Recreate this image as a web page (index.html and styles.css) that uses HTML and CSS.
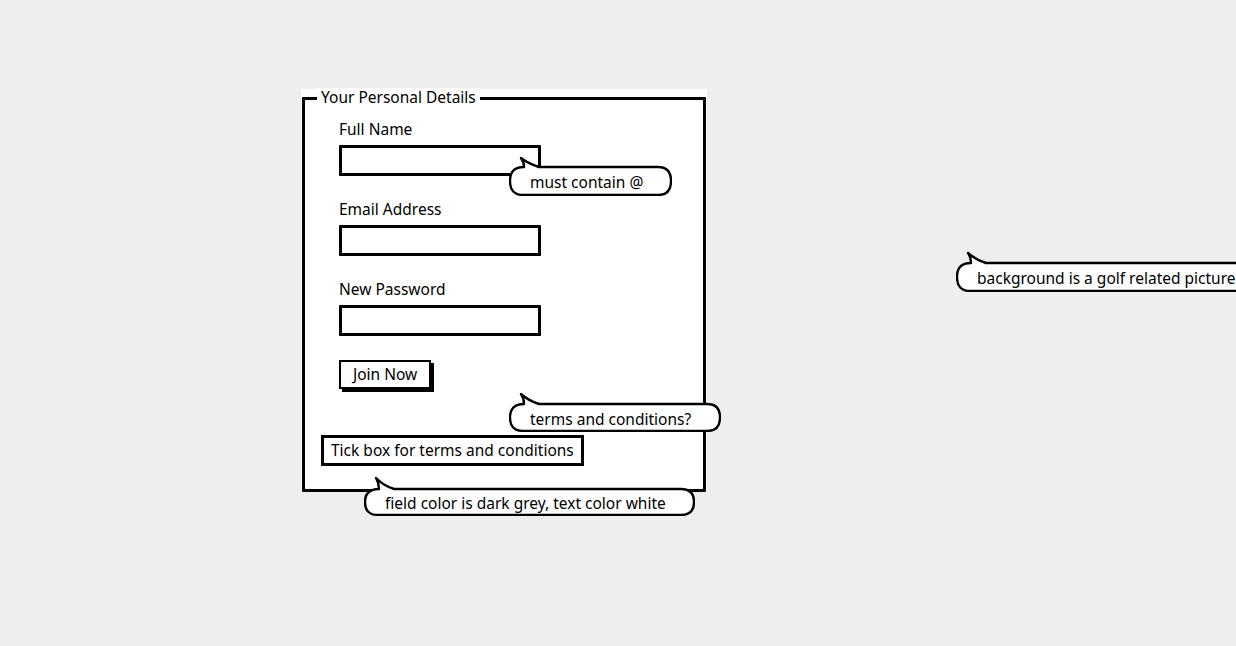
FILE: index.html
```html
<!DOCTYPE html>
<html>
<head>
<meta charset="utf-8">
<link rel="stylesheet" href="styles.css">
</head>
<body>
<div class="canvas">
  <div class="panel">
    <div class="frame">
      <div class="legend">Your Personal Details</div>
      <div class="fields">
        <div class="label">Full Name</div>
        <div class="input"></div>
        <div class="label gap">Email Address</div>
        <div class="input"></div>
        <div class="label gap">New Password</div>
        <div class="input"></div>
        <div class="button">Join Now</div>
      </div>
      <div class="tick">Tick box for terms and conditions</div>
    </div>
  </div>

  <div class="callout c1">
    <svg width="163" height="40" viewBox="0 0 163 40"><path d="M15 11 Q15 6 12 2 Q20 8 30 11 L149 11 Q162 11 162 25 Q162 39 149 39 L14 39 Q1 39 1 25 Q1 11 15 11 Z"/></svg>
    <span>must contain @</span>
  </div>
  <div class="callout c2">
    <svg width="212" height="40" viewBox="0 0 212 40"><path d="M15 12 Q15 6 12 2 Q20 9 30 12 L198 12 Q211 12 211 25.5 Q211 39 198 39 L14 39 Q1 39 1 25.5 Q1 12 15 12 Z"/></svg>
    <span>terms and conditions?</span>
  </div>
  <div class="callout c3">
    <svg width="331" height="40" viewBox="0 0 331 40"><path d="M15 13 Q15 7 12 2 Q20 10 30 13 L317 13 Q330 13 330 26 Q330 39 317 39 L14 39 Q1 39 1 26 Q1 13 15 13 Z"/></svg>
    <span>field color is dark grey, text color white</span>
  </div>
  <div class="callout c4">
    <svg width="300" height="41" viewBox="0 0 300 41"><path d="M15 12 Q15 6 12 2 Q20 9 30 12 L286 12 Q299 12 299 26 Q299 40 286 40 L14 40 Q1 40 1 26 Q1 12 15 12 Z"/></svg>
    <span>background is a golf related picture</span>
  </div>
</div>
</body>
</html>
```
FILE: styles.css
```css
html, body {
  margin: 0;
  padding: 0;
  background: #eeeeee;
  overflow: hidden;
}
body {
  width: 1236px;
  height: 646px;
  font-family: "Noto Sans", "Liberation Sans", sans-serif;
  font-size: 15.5px;
  line-height: 18px;
  color: #000;
}
.canvas {
  position: relative;
  width: 1236px;
  height: 646px;
  padding-top: 89px;
  box-sizing: border-box;
}
.panel {
  margin-left: 301px;
  width: 406px;
  height: 403px;
  background: #fff;
  padding-top: 8px;
  box-sizing: border-box;
}
.frame {
  position: relative;
  margin-left: 1px;
  width: 404px;
  height: 395px;
  border: 3px solid #000;
  border-radius: 1px;
  box-sizing: border-box;
  padding: 20px 0 0 34px;
}
.legend {
  position: absolute;
  left: 12px;
  top: -12px;
  background: #fff;
  padding: 0 4px 0 4px;
  line-height: 18px;
}
.fields {
  display: flex;
  flex-direction: column;
  align-items: flex-start;
}
.label {
  height: 18px;
  margin-bottom: 7px;
}
.label.gap {
  margin-top: 24px;
}
.input {
  width: 202px;
  height: 31px;
  border: 3px solid #000;
  border-radius: 1px;
  box-sizing: border-box;
  background: #fff;
}
.button {
  margin-top: 24px;
  height: 29px;
  padding: 0 12px;
  border: 2.5px solid #000;
  box-sizing: border-box;
  line-height: 24px;
  box-shadow: 3px 3px 0 #000;
  background: #fff;
}
.tick {
  display: inline-block;
  margin-top: 46px;
  margin-left: -18px;
  height: 31px;
  padding: 0 7px;
  border: 3px solid #000;
  box-sizing: border-box;
  line-height: 25px;
}
.callout {
  position: absolute;
}
.callout svg {
  display: block;
}
.callout path {
  fill: #fff;
  stroke: #000;
  stroke-width: 2.4;
  stroke-linejoin: round;
}
.callout span {
  position: absolute;
  left: 21px;
  white-space: nowrap;
}
.c1 { left: 509px; top: 156px; }
.c1 span { top: 17px; }
.c2 { left: 509px; top: 392px; }
.c2 span { top: 18px; }
.c3 { left: 364px; top: 476px; }
.c3 span { top: 18px; }
.c4 { left: 956px; top: 251px; }
.c4 span { top: 18px; }
```
